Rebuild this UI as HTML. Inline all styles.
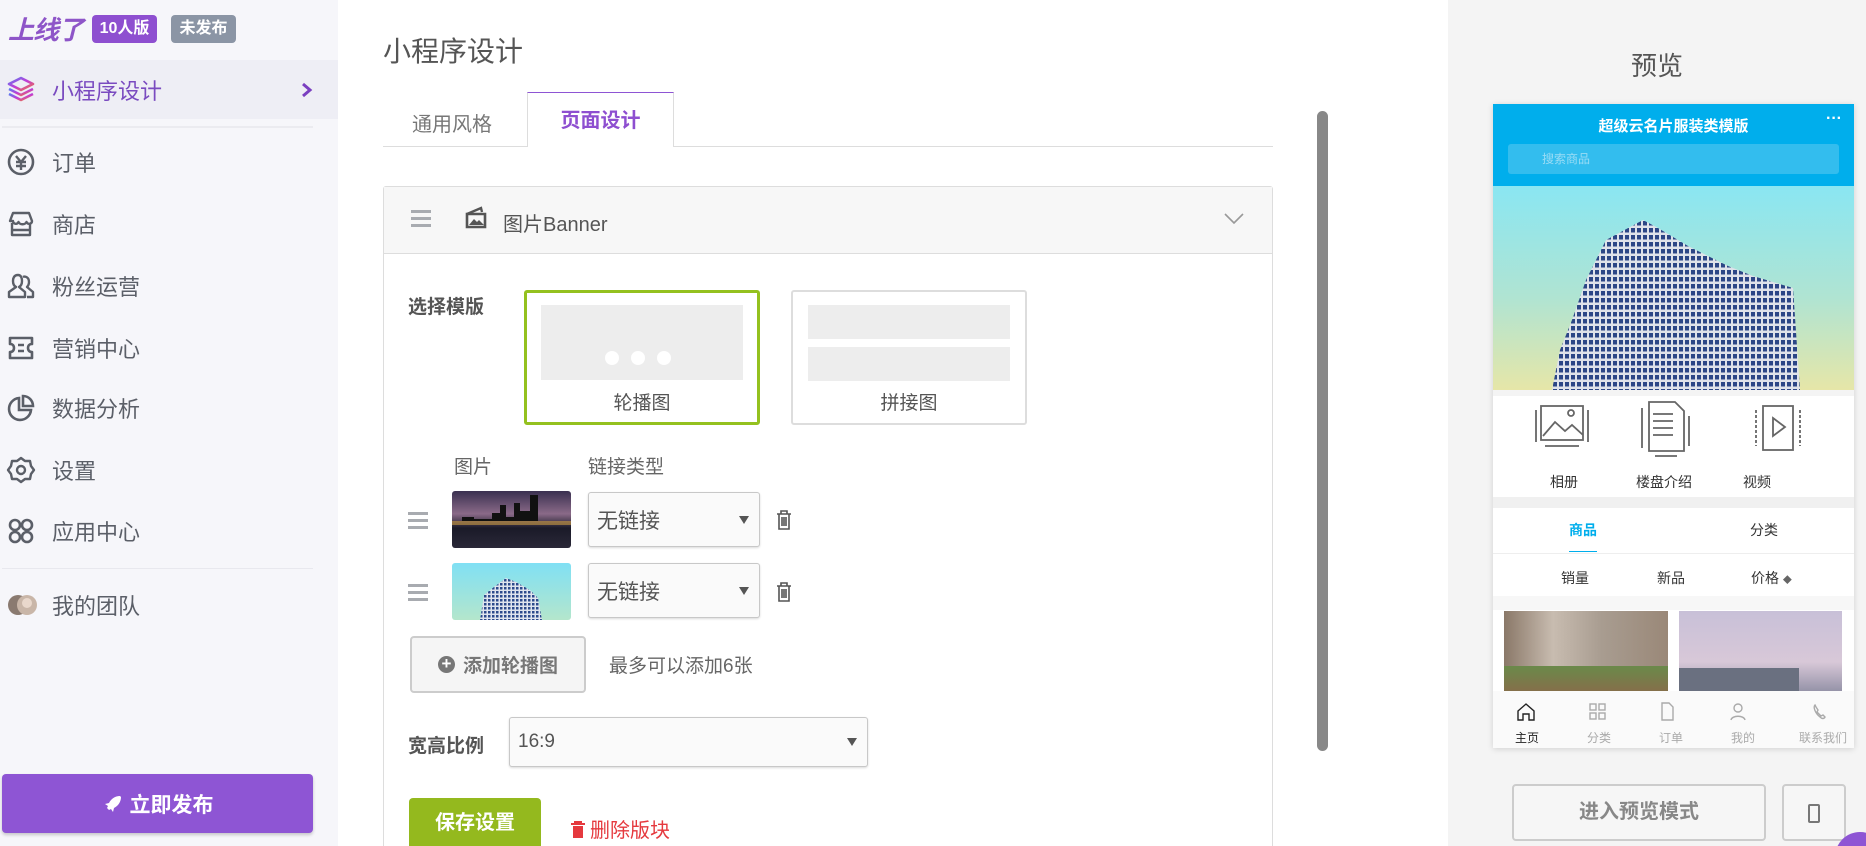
<!DOCTYPE html>
<html style="overflow:hidden;width:1866px;height:846px"><head><meta charset="utf-8"><style>
*{margin:0;padding:0;box-sizing:border-box}
body{width:1866px;height:846px;overflow:hidden;background:#fff;font-family:"Liberation Sans","Noto Sans CJK SC",sans-serif;color:#555;position:relative}
.a{position:absolute}
.side{left:0;top:0;width:338px;height:846px;background:#f6f6fa}
.mi{position:absolute;left:0;width:338px;height:50px;display:flex;align-items:center;font-size:22px;color:#5b5f68}
.mi svg{position:absolute;left:6px}
.mi span{position:absolute;left:52px}
.sel{border:1px solid #c8c8c8;border-radius:3px;background:#fafafa;box-shadow:0 1px 2px rgba(0,0,0,.15);font-size:21px;color:#555;display:flex;align-items:center;padding-left:8px}
.sel:after{content:"";position:absolute;right:10px;top:50%;margin-top:-4px;border:5px solid transparent;border-top:8px solid #555;border-bottom:0}
.ham{width:20px;height:3px;background:#a8abb0;box-shadow:0 7px 0 #a8abb0,0 14px 0 #a8abb0}
</style></head><body>
<div class="a" style="left:0;top:0;width:1866px;height:846px;overflow:hidden">

<div class="a side">
  <div class="a" style="left:8px;top:10px;font-size:26px;font-weight:bold;font-style:italic;color:#8e55c8;letter-spacing:-1px">上线了</div>
  <div class="a" style="left:92px;top:15px;width:65px;height:28px;background:#8e4fd0;border-radius:4px;color:#fff;font-size:16px;font-weight:bold;text-align:center;line-height:28px">10人版</div>
  <div class="a" style="left:171px;top:15px;width:65px;height:28px;background:#8b95a5;border-radius:4px;color:#fff;font-size:16px;font-weight:bold;text-align:center;line-height:28px">未发布</div>
  <div class="mi" style="top:60px;height:59px;background:#eeeef5;color:#7a4bc0">
    <svg width="30" height="30" viewBox="0 0 30 30"><defs><linearGradient id="g" x1="0" y1="0" x2="1" y2="1"><stop offset="0" stop-color="#5b7cf0"/><stop offset=".5" stop-color="#c23bd6"/><stop offset="1" stop-color="#f07a3a"/></linearGradient></defs><g fill="none" stroke="url(#g)" stroke-width="2.6" stroke-linejoin="round"><path d="M15 3L27 9 15 15 3 9z"/><path d="M3 14l12 6 12-6"/><path d="M3 19l12 6 12-6"/></g></svg>
    <span>小程序设计</span>
    <svg style="left:300px" width="14" height="16" viewBox="0 0 14 16"><path d="M3 2l7 6-7 6" fill="none" stroke="#7a3fc0" stroke-width="3"/></svg>
  </div>
  <div class="a" style="left:2px;top:126px;width:311px;height:2px;background:#ebebf0"></div>
  <div class="mi" style="top:137px"><svg width="30" height="30" viewBox="0 0 30 30"><circle cx="15" cy="15" r="12" fill="none" stroke="#5b5f68" stroke-width="2.6"/><path d="M10 9l5 6 5-6M15 15v8M10 15h10M10 19h10" fill="none" stroke="#5b5f68" stroke-width="2.4"/></svg><span>订单</span></div>
  <div class="mi" style="top:199px"><svg width="30" height="30" viewBox="0 0 30 30"><path d="M4 12l3-8h16l3 8c0 3-4 4-5.5 1-1.5 3-6.5 3-8 0-1.5 3-5.5 2-5.5-1zM6 14v12h18V14M6 21h18" fill="none" stroke="#5b5f68" stroke-width="2.4" stroke-linejoin="round"/></svg><span>商店</span></div>
  <div class="mi" style="top:261px"><svg width="30" height="30" viewBox="0 0 30 30"><path d="M12 4c-4 0-5 3-5 6s1 5 3 6l-7 5v5h16v-5l-6-5c2-1 3-3 3-6s-1-6-4-6zM17 6c2-1 6 0 6 5 0 3-1 4-2 5l6 5v5h-6" fill="none" stroke="#5b5f68" stroke-width="2.4" stroke-linejoin="round"/></svg><span>粉丝运营</span></div>
  <div class="mi" style="top:323px"><svg width="30" height="30" viewBox="0 0 30 30"><path d="M4 5h22v6c-3 0-4 2-4 4s1 4 4 4v6H4v-6c3 0 4-2 4-4s-1-4-4-4zM12 12h6M12 18h6" fill="none" stroke="#5b5f68" stroke-width="2.6" stroke-linejoin="round"/></svg><span>营销中心</span></div>
  <div class="mi" style="top:383px"><svg width="30" height="30" viewBox="0 0 30 30"><path d="M13 5a11 11 0 1 0 12 12H13z" fill="none" stroke="#5b5f68" stroke-width="2.6"/><path d="M17 3a10 10 0 0 1 10 10H17z" fill="none" stroke="#5b5f68" stroke-width="2.6"/></svg><span>数据分析</span></div>
  <div class="mi" style="top:445px"><svg width="30" height="30" viewBox="0 0 30 30"><path d="M15 3l4 3 5 0 1 5 3 4-3 4-1 5-5 0-4 3-4-3-5 0-1-5-3-4 3-4 1-5 5 0z" fill="none" stroke="#5b5f68" stroke-width="2.4" stroke-linejoin="round"/><circle cx="15" cy="15" r="4" fill="none" stroke="#5b5f68" stroke-width="2.4"/></svg><span>设置</span></div>
  <div class="mi" style="top:506px"><svg width="30" height="30" viewBox="0 0 30 30"><g fill="none" stroke="#5b5f68" stroke-width="2.6"><circle cx="9" cy="9" r="5"/><circle cx="21" cy="9" r="5"/><circle cx="9" cy="21" r="5"/><circle cx="21" cy="21" r="5"/></g></svg><span>应用中心</span></div>
  <div class="a" style="left:2px;top:568px;width:311px;height:1px;background:#e8e8ee"></div>
  <div class="mi" style="top:580px"><svg width="34" height="30" viewBox="0 0 34 30"><circle cx="12" cy="15" r="10" fill="#8a7a70"/><circle cx="21" cy="15" r="10" fill="#c9b6a8"/><circle cx="21" cy="13" r="5" fill="#e9d8cc"/></svg><span>我的团队</span></div>
  <div class="a" style="left:2px;top:774px;width:311px;height:59px;background:#8e55d4;border-radius:4px;color:#fff;font-size:21px;font-weight:bold;display:flex;align-items:center;justify-content:center;box-shadow:0 2px 3px rgba(0,0,0,.2)"><svg width="20" height="20" viewBox="0 0 20 20" style="margin-right:8px"><path d="M18 2c-5 0-9 3-11 7l-4 1 3 2-1 2 2 2 2-1 2 3 1-4c4-2 7-6 7-11z" fill="#fff"/></svg>立即发布</div>
</div>

<div class="a" style="left:383px;top:30px;font-size:28px;color:#555">小程序设计</div>
<div class="a" style="left:383px;top:146px;width:890px;height:1px;background:#ddd"></div>
<div class="a" style="left:412px;top:108px;font-size:20px;color:#777">通用风格</div>
<div class="a" style="left:527px;top:92px;width:147px;height:55px;background:#fff;border:1px solid #ddd;border-top:1px solid #8e55d4;border-bottom:none;text-align:center;line-height:56px;font-size:20px;font-weight:bold;color:#8e4fd0">页面设计</div>

<div class="a" style="left:383px;top:186px;width:890px;height:680px;border:1px solid #ddd;border-radius:3px"></div>
<div class="a" style="left:384px;top:187px;width:888px;height:67px;background:#f7f7f7;border-bottom:1px solid #ddd"></div>
<div class="a ham" style="left:411px;top:210px"></div>
<svg class="a" style="left:464px;top:206px" width="24" height="24" viewBox="0 0 24 24"><path d="M3 8h18v13H3z" fill="none" stroke="#555" stroke-width="2.6"/><path d="M5 19l5-6 3 3 2-2 5 5z" fill="#555"/><path d="M3 8l14-6 1 4" fill="none" stroke="#555" stroke-width="2.4"/></svg>
<div class="a" style="left:503px;top:208px;font-size:20px;color:#555">图片Banner</div>
<svg class="a" style="left:1224px;top:213px" width="20" height="12" viewBox="0 0 20 12"><path d="M1 1l9 9 9-9" fill="none" stroke="#999" stroke-width="1.6"/></svg>

<div class="a" style="left:408px;top:292px;font-size:19px;font-weight:bold;color:#555">选择模版</div>
<div class="a" style="left:524px;top:290px;width:236px;height:135px;border:3px solid #94c11f;border-radius:3px;background:#fff">
  <div class="a" style="left:14px;top:12px;width:202px;height:75px;background:#ededed"></div>
  <div class="a" style="left:78px;top:58px;width:14px;height:14px;border-radius:50%;background:#fff;box-shadow:26px 0 #fff,52px 0 #fff"></div>
  <div class="a" style="left:0;width:230px;top:95px;text-align:center;font-size:19px;color:#555">轮播图</div>
</div>
<div class="a" style="left:791px;top:290px;width:236px;height:135px;border:2px solid #ddd;border-radius:3px;background:#fff">
  <div class="a" style="left:15px;top:13px;width:202px;height:34px;background:#ededed"></div>
  <div class="a" style="left:15px;top:55px;width:202px;height:34px;background:#ededed"></div>
  <div class="a" style="left:0;width:232px;top:96px;text-align:center;font-size:19px;color:#555">拼接图</div>
</div>

<div class="a" style="left:454px;top:452px;font-size:19px;color:#666">图片</div>
<div class="a" style="left:588px;top:452px;font-size:19px;color:#666">链接类型</div>

<div class="a ham" style="left:408px;top:512px"></div>
<div class="a" style="left:452px;top:491px;width:119px;height:57px;border-radius:3px;overflow:hidden;background:linear-gradient(#3a3050,#8a6a88 40%,#1a1a28 65%,#2a2838 100%)"><svg width="119" height="57"><path d="M0 30h10v-4h12v2h18V22h8v-8h6v12h8V12h6v8h10V4h8v26H0z" fill="#111"/><path d="M0 30h119v4H0z" fill="#c89a40" opacity=".6"/></svg></div>
<div class="a sel" style="left:588px;top:492px;width:172px;height:55px">无链接</div>
<svg class="a" style="left:776px;top:510px" width="16" height="20" viewBox="0 0 16 20"><path d="M1 4h14M5 4V1h6v3M3 4v15h10V4M6 7v9M8 7v9M10 7v9" fill="none" stroke="#555" stroke-width="1.6"/></svg>

<div class="a ham" style="left:408px;top:584px"></div>
<div class="a" style="left:452px;top:563px;width:119px;height:57px;border-radius:3px;background:linear-gradient(#80e0f4,#b4e6cc);overflow:hidden"><svg width="119" height="57"><defs><pattern id="w2" width="4" height="4" patternUnits="userSpaceOnUse"><rect width="4" height="4" fill="#e0e4ee"/><rect width="2.5" height="2.5" fill="#2d4a8c"/></pattern></defs><path d="M28 57l4-25 10-8 12-9 10 4 14 8 8 8 4 22z" fill="url(#w2)"/></svg></div>
<div class="a sel" style="left:588px;top:563px;width:172px;height:55px">无链接</div>
<svg class="a" style="left:776px;top:582px" width="16" height="20" viewBox="0 0 16 20"><path d="M1 4h14M5 4V1h6v3M3 4v15h10V4M6 7v9M8 7v9M10 7v9" fill="none" stroke="#555" stroke-width="1.6"/></svg>

<div class="a" style="left:410px;top:636px;width:176px;height:57px;border:2px solid #ccc;border-radius:4px;background:#f5f5f5;display:flex;align-items:center;justify-content:center;font-size:19px;font-weight:bold;color:#777"><span style="display:inline-block;width:17px;height:17px;border-radius:50%;background:#777;color:#fff;font-size:17px;line-height:16px;text-align:center;margin-right:8px">+</span>添加轮播图</div>
<div class="a" style="left:609px;top:651px;font-size:19px;color:#666">最多可以添加6张</div>

<div class="a" style="left:408px;top:731px;font-size:19px;font-weight:bold;color:#555">宽高比例</div>
<div class="a sel" style="left:509px;top:717px;width:359px;height:50px;font-size:19px">16:9</div>

<div class="a" style="left:409px;top:798px;width:132px;height:60px;background:#94b91e;border-radius:4px;color:#fff;font-size:20px;font-weight:bold;text-align:center;line-height:50px">保存设置</div>
<div class="a" style="left:570px;top:814px;font-size:20px;color:#e5393e"><svg width="16" height="18" viewBox="0 0 16 18" style="vertical-align:-2px;margin-right:4px"><path d="M1 3h14M5 3V1h6v2" stroke="#e5393e" stroke-width="2" fill="none"/><path d="M3 5h10v12H3z" fill="#e5393e"/></svg>删除版块</div>

<div class="a" style="left:1317px;top:111px;width:11px;height:640px;background:#888;border-radius:6px"></div>

<!-- preview -->
<div class="a" style="left:1448px;top:0;width:418px;height:846px;background:#f4f4f4"></div>
<div class="a" style="left:1448px;top:46px;width:418px;text-align:center;font-size:26px;color:#555">预览</div>
<div class="a" style="left:1493px;top:104px;width:361px;height:644px;background:#fff;box-shadow:0 1px 6px rgba(0,0,0,.15);overflow:hidden">
  <div class="a" style="left:0;top:0;width:361px;height:82px;background:#00aeec"></div>
  <div class="a" style="left:0;top:11px;width:361px;text-align:center;color:#fff;font-size:15px;font-weight:bold">超级云名片服装类模版</div>
  <div class="a" style="left:333px;top:6px;color:#fff;font-size:16px;font-weight:bold">···</div>
  <div class="a" style="left:15px;top:40px;width:331px;height:30px;background:#33bdee;border-radius:3px;color:#9adcf5;font-size:12px;line-height:30px;padding-left:34px">搜索商品</div>
  <div class="a" style="left:0;top:82px;width:361px;height:204px;background:linear-gradient(#8ae6f2,#b0e4d2 55%,#e6e6a8)"></div>
  <svg class="a" style="left:0;top:82px" width="361" height="204" viewBox="0 0 361 204"><defs><pattern id="w" width="6" height="7" patternUnits="userSpaceOnUse"><rect width="6" height="7" fill="#dfe2ea"/><rect width="4" height="4.5" fill="#2c4686"/></pattern></defs><path d="M59 204l8-40 12-30 14-40 20-40 37-20 15 8 30 18 40 20 25 10 40 12 7 102z" fill="url(#w)"/></svg>
  <div class="a" style="left:0;top:286px;width:361px;height:6px;background:#f4f4f4"></div>
  <svg class="a" style="left:40px;top:294px" width="290" height="66" viewBox="0 0 290 66"><g fill="none" stroke="#666" stroke-width="1.8"><rect x="8" y="8" width="42" height="34"/><path d="M10 38l12-14 10 9 7-6 11 10"/><circle cx="38" cy="15" r="3"/><path d="M3 12v32M55 12v32M12 48h34"/><path d="M116 4h26l9 9v40h-35zM120 16h20M120 23h20M120 30h20M120 37h20M109 10v40M156 18v30M122 58h22"/><rect x="230" y="8" width="30" height="44"/><path d="M240 20l12 9-12 9z"/><path d="M223 12v36M267 12v36" stroke-dasharray="3 2"/></g></svg>
  <div class="a" style="left:57px;top:368px;font-size:14px;color:#333">相册</div>
  <div class="a" style="left:143px;top:368px;font-size:14px;color:#333">楼盘介绍</div>
  <div class="a" style="left:250px;top:368px;font-size:14px;color:#333">视频</div>
  <div class="a" style="left:0;top:393px;width:361px;height:11px;background:#f0f0f0"></div>
  <div class="a" style="left:76px;top:416px;font-size:14px;color:#00aeec;font-weight:bold">商品</div>
  <div class="a" style="left:76px;top:447px;width:28px;height:1px;background:#00aeec"></div>
  <div class="a" style="left:257px;top:416px;font-size:14px;color:#333">分类</div>
  <div class="a" style="left:0;top:449px;width:361px;height:1px;background:#eee"></div>
  <div class="a" style="left:68px;top:464px;font-size:14px;color:#333">销量</div>
  <div class="a" style="left:164px;top:464px;font-size:14px;color:#333">新品</div>
  <div class="a" style="left:258px;top:464px;font-size:14px;color:#333">价格 <span style="font-size:9px;color:#666">◆</span></div>
  <div class="a" style="left:0;top:492px;width:361px;height:14px;background:#f7f7f7"></div>
  <div class="a" style="left:11px;top:507px;width:164px;height:85px;background:linear-gradient(90deg,#8a7868,#c8bcb0 30%,#a89c90 60%,#9a8878);"><div class="a" style="left:0;bottom:0;width:164px;height:30px;background:linear-gradient(#6a8a4a,#8a6a4a)"></div></div>
  <div class="a" style="left:186px;top:507px;width:163px;height:85px;background:linear-gradient(#c8c0d8,#d8c8d8 60%,#8a8aa0)"><div class="a" style="left:0;bottom:0;width:120px;height:28px;background:#6a7080"></div></div>
  <div class="a" style="left:0;top:587px;width:361px;height:57px;background:#fafafa"></div>
  <div class="a" style="left:22px;top:625px;font-size:12px;color:#222">主页</div>
  <div class="a" style="left:94px;top:625px;font-size:12px;color:#aaa">分类</div>
  <div class="a" style="left:166px;top:625px;font-size:12px;color:#aaa">订单</div>
  <div class="a" style="left:238px;top:625px;font-size:12px;color:#aaa">我的</div>
  <div class="a" style="left:306px;top:625px;font-size:12px;color:#aaa">联系我们</div>
  <svg class="a" style="left:0;top:596px" width="361" height="24" viewBox="0 0 361 24"><g fill="none" stroke-width="1.4"><path d="M25 11l8-7 8 7v9h-5v-6h-6v6h-5z" stroke="#222"/><g stroke="#aaa"><rect x="97" y="4" width="6" height="6"/><rect x="106" y="4" width="6" height="6"/><rect x="97" y="13" width="6" height="6"/><rect x="106" y="13" width="6" height="6"/><path d="M169 3h7l4 4v13h-11z"/><circle cx="245" cy="8" r="4"/><path d="M238 20c1-5 13-5 14 0"/><path d="M322 5c-2 2 0 8 5 12 2 2 4 2 5 0l-2-2-2 1-4-4 1-2-2-3z"/></g></g></svg>
</div>
<div class="a" style="left:1512px;top:784px;width:254px;height:57px;border:2px solid #ccc;border-radius:4px;background:#f6f6f6;text-align:center;line-height:53px;font-size:20px;font-weight:bold;color:#888">进入预览模式</div>
<div class="a" style="left:1782px;top:784px;width:64px;height:57px;border:2px solid #ccc;border-radius:4px;background:#f6f6f6"><div class="a" style="left:24px;top:18px;width:12px;height:19px;border:2px solid #777;border-radius:2px"></div></div>
<div class="a" style="left:1835px;top:832px;width:50px;height:50px;border-radius:50%;background:#8e55d4"></div>
</div>
</body></html>
